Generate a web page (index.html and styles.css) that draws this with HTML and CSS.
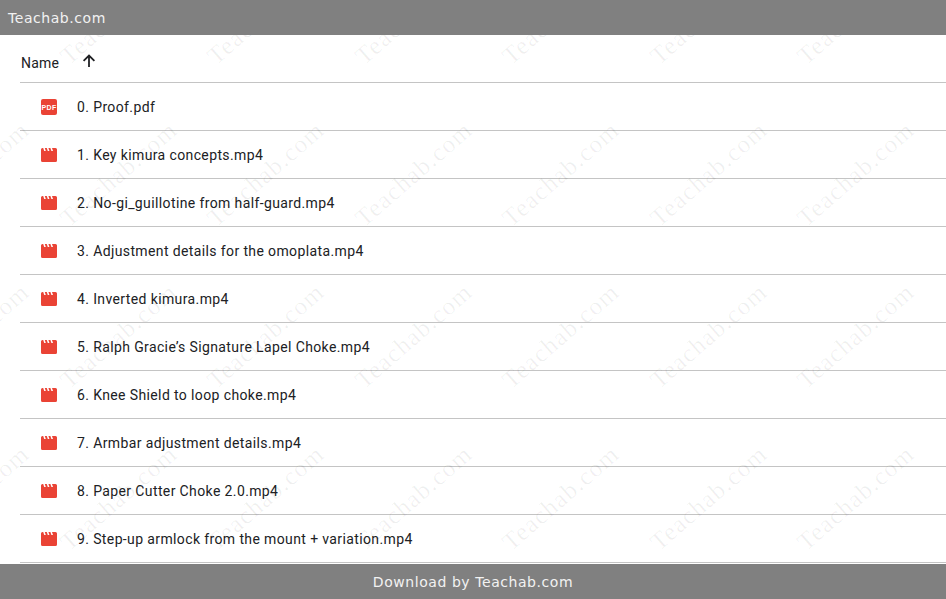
FILE: index.html
```html
<!DOCTYPE html>
<html lang="en">
<head>
<meta charset="utf-8">
<title>Teachab.com</title>
<link rel="stylesheet" href="styles.css">
</head>
<body>
<svg class="defs" width="0" height="0" aria-hidden="true">
  <symbol id="film" viewBox="0 0 16 16">
    <path d="M0 2.5Q0 1 1.5 1H2.2L3.2 4H4.8L3.8 1H5.8L6.8 4H8.4L7.4 1H9.4L10.4 4H12L11 1H14.5Q16 1 16 2.5V13.5Q16 15 14.5 15H1.5Q0 15 0 13.5Z" fill="#ea4335"/>
  </symbol>
</svg>
<header class="top">Teachab.com</header>
<main class="list">
  <div class="head">
    <span class="head-name">Name</span>
    <svg class="arrow" width="16" height="16" viewBox="0 0 16 16"><path d="M8 14V2.5M2.6 7.9 8 2.5l5.4 5.4" fill="none" stroke="#202124" stroke-width="1.8"/></svg>
  </div>
  <div class="row">
    <svg class="icon" width="16" height="16" viewBox="0 0 16 16"><rect width="16" height="16" rx="2" fill="#ea4335"/><text x="8" y="10.6" class="pdf">PDF</text></svg>
    <span>0. Proof.pdf</span>
  </div>
  <div class="row"><svg class="icon" width="16" height="16"><use href="#film"/></svg><span>1. Key kimura concepts.mp4</span></div>
  <div class="row"><svg class="icon" width="16" height="16"><use href="#film"/></svg><span>2. No-gi_guillotine from half-guard.mp4</span></div>
  <div class="row"><svg class="icon" width="16" height="16"><use href="#film"/></svg><span>3. Adjustment details for the omoplata.mp4</span></div>
  <div class="row"><svg class="icon" width="16" height="16"><use href="#film"/></svg><span>4. Inverted kimura.mp4</span></div>
  <div class="row"><svg class="icon" width="16" height="16"><use href="#film"/></svg><span>5. Ralph Gracie’s Signature Lapel Choke.mp4</span></div>
  <div class="row"><svg class="icon" width="16" height="16"><use href="#film"/></svg><span>6. Knee Shield to loop choke.mp4</span></div>
  <div class="row"><svg class="icon" width="16" height="16"><use href="#film"/></svg><span>7. Armbar adjustment details.mp4</span></div>
  <div class="row"><svg class="icon" width="16" height="16"><use href="#film"/></svg><span>8. Paper Cutter Choke 2.0.mp4</span></div>
  <div class="row"><svg class="icon" width="16" height="16"><use href="#film"/></svg><span>9. Step-up armlock from the mount + variation.mp4</span></div>
</main>
<div class="marks" aria-hidden="true">
  <span>Teachab.com</span><span>Teachab.com</span><span>Teachab.com</span><span>Teachab.com</span><span>Teachab.com</span><span>Teachab.com</span><span>Teachab.com</span>
  <span>Teachab.com</span><span>Teachab.com</span><span>Teachab.com</span><span>Teachab.com</span><span>Teachab.com</span><span>Teachab.com</span><span>Teachab.com</span>
  <span>Teachab.com</span><span>Teachab.com</span><span>Teachab.com</span><span>Teachab.com</span><span>Teachab.com</span><span>Teachab.com</span><span>Teachab.com</span>
  <span>Teachab.com</span><span>Teachab.com</span><span>Teachab.com</span><span>Teachab.com</span><span>Teachab.com</span><span>Teachab.com</span><span>Teachab.com</span>
</div>
<footer class="bottom">Download by Teachab.com</footer>
</body>
</html>
```
FILE: styles.css
```css
* { box-sizing: border-box; }
html, body { margin: 0; height: 100%; }
body {
  position: relative;
  width: 946px;
  height: 599px;
  overflow: hidden;
  background: #fff;
  display: flex;
  flex-direction: column;
  font-family: Roboto, "Liberation Sans", sans-serif;
  color: #202124;
}
.defs { position: absolute; }
.top, .bottom {
  position: relative;
  z-index: 2;
  height: 35px;
  flex: none;
  background: #808080;
  color: #f2f2f2;
  font-family: "DejaVu Sans", sans-serif;
  font-size: 14px;
  line-height: 36px;
  letter-spacing: 0.56px;
}
.top { padding-left: 8px; }
.bottom { text-align: center; margin-top: auto; }
.list {
  flex: 1;
  min-height: 0;
  margin-left: 20px;
  overflow: hidden;
}
.head {
  display: flex;
  align-items: center;
  height: 48px;
  border-bottom: 1px solid #c4c4c4;
  font-size: 14px;
  padding: 8px 0 0 1px;
}
.head-name { width: 60px; letter-spacing: 0.2px; }
.arrow { margin-top: -4px; }
.row {
  display: flex;
  align-items: center;
  height: 48px;
  border-bottom: 1px solid #c4c4c4;
  font-size: 14px;
  letter-spacing: 0.38px;
  padding-left: 21px;
}
.icon { flex: none; margin-right: 20px; }
.pdf {
  font-family: "Liberation Sans", sans-serif;
  font-weight: 700;
  font-size: 7px;
  fill: #fff;
  text-anchor: middle;
}
.marks {
  position: absolute;
  z-index: 1;
  left: -103px;
  top: -69px;
  display: grid;
  grid-template-columns: repeat(7, 147.5px);
  grid-auto-rows: 162px;
  pointer-events: none;
}
.marks span {
  display: flex;
  align-items: center;
  justify-content: center;
  font-family: "Liberation Serif", serif;
  font-size: 25px;
  letter-spacing: 1.2px;
  color: rgba(0, 0, 0, 0.06);
  white-space: nowrap;
  transform: rotate(-41deg);
}
```
